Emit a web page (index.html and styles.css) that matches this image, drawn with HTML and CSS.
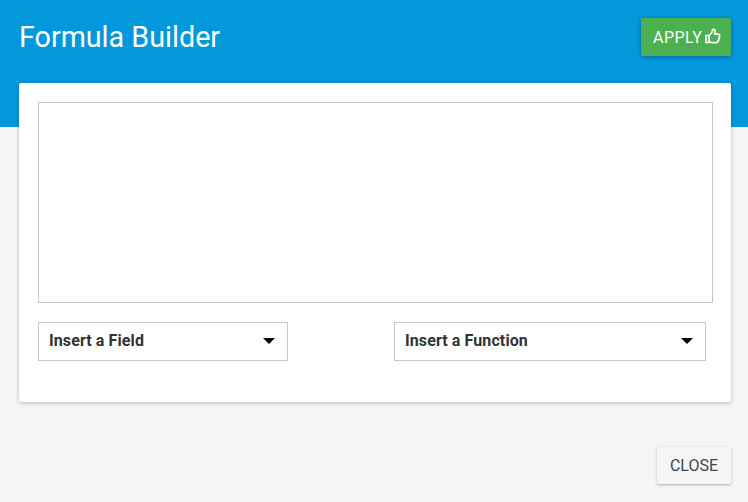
FILE: index.html
```html
<!DOCTYPE html>
<html lang="en">
	<head>
		<title>Formula Builder</title>
		<meta charset="utf-8">
		<link rel="stylesheet" href="styles.css">
	</head>
	<body>
		<div class="hdr">
			<h1>Formula Builder</h1>
			<button class="btn apply">APPLY
				<svg class="thumb" viewBox="0 0 16 16" width="16" height="16">
					<path d="M1 7.500h3v7H1z" fill="none" stroke="#fff" stroke-width="1.700"/>
					<path d="M4 8l2.700-3.200c.6-.9.9-1.800.9-3.500 1.600-.3 2.600.7 2.600 2.300 0 1-.3 1.700-.6 2.500h3.500c1.700 0 1.900 1.900 1 2.600.5.800.4 1.800-.4 2.300.3.900 0 1.700-.8 2.100.1 1-.5 1.600-1.500 1.600H8c-1.500 0-2.600-.4-4-.9" fill="none" stroke="#fff" stroke-width="1.700" stroke-linejoin="round"/>
				</svg>
			</button>
		</div>
		<div class="card">
			<textarea class="formula"></textarea>
			<div class="pickers">
				<div class="pick field">Insert a Field<span class="caret"></span></div>
				<div class="pick func">Insert a Function<span class="caret"></span></div>
			</div>
		</div>
		<div class="ftr">
			<button class="btn close">CLOSE</button>
		</div>
	</body>
</html>
```

FILE: styles.css
```css
html, body {
	margin: 0;
	height: 502px;
	overflow: hidden;
	font-family: Roboto, sans-serif;
	background-color: #f5f5f5;
	color: #333;
}
.hdr {
	height: 127px;
	box-sizing: border-box;
	padding: 18px 17px 0 19px;
	background-color: #0398dc;
	display: flex;
	justify-content: space-between;
	align-items: flex-start;
}
h1 {
	margin: 0;
	color: #fff;
	font-size: 28.7px;
	font-weight: 400;
	line-height: 38px;
}
.btn {
	border: 0;
	border-radius: 2px;
	padding: 0;
	font-family: Roboto, sans-serif;
	font-size: 16px;
}
.apply {
	width: 90px;
	height: 38px;
	padding-left: 12px;
	background-color: #4caf50;
	color: #fff;
	display: flex;
	align-items: center;
	gap: 3px;
	letter-spacing: .45px;
	box-shadow: 0 1px 4px rgba(0, 0, 0, .35);
}
.thumb {
	margin-top: -2px;
}
.card {
	box-sizing: border-box;
	width: 712px;
	height: 319px;
	margin: -44px 0 0 19px;
	padding: 19px 18px 0 19px;
	position: relative;
	background-color: #fff;
	border-radius: 2px;
	box-shadow: 0 1px 4px rgba(0, 0, 0, .25);
}
.formula {
	display: block;
	box-sizing: border-box;
	width: 675px;
	height: 201px;
	margin: 0;
	padding: 0;
	border: 1px solid #c8c8c8;
	resize: none;
	outline: none;
}
.pickers {
	display: flex;
	gap: 106px;
	margin-top: 19px;
}
.pick {
	box-sizing: border-box;
	height: 39px;
	padding: 0 12px 2px 10px;
	border: 1px solid #c8c8c8;
	display: flex;
	align-items: center;
	justify-content: space-between;
	font-size: 16px;
	font-weight: 700;
	letter-spacing: .1px;
}
.field {
	width: 250px;
}
.func {
	width: 312px;
}
.caret {
	width: 0;
	height: 0;
	border-left: 6px solid transparent;
	border-right: 6px solid transparent;
	border-top: 6px solid #000;
}
.ftr {
	display: flex;
	justify-content: flex-end;
	padding: 45px 17px 0 0;
}
.close {
	width: 74px;
	height: 37px;
	background-color: #f5f5f5;
	color: #444;
	box-shadow: 0 1px 3px rgba(0, 0, 0, .28);
}
```
